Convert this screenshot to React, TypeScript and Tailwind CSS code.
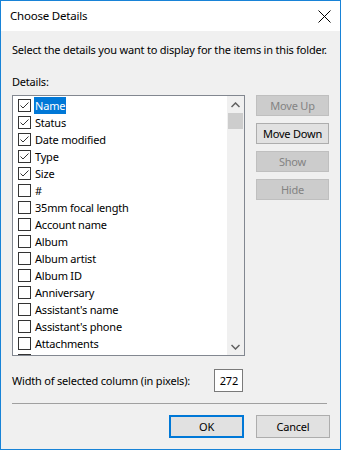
import React from "react";

const items: { label: string; checked: boolean }[] = [
  { label: "Name", checked: true },
  { label: "Status", checked: true },
  { label: "Date modified", checked: true },
  { label: "Type", checked: true },
  { label: "Size", checked: true },
  { label: "#", checked: false },
  { label: "35mm focal length", checked: false },
  { label: "Account name", checked: false },
  { label: "Album", checked: false },
  { label: "Album artist", checked: false },
  { label: "Album ID", checked: false },
  { label: "Anniversary", checked: false },
  { label: "Assistant's name", checked: false },
  { label: "Assistant's phone", checked: false },
  { label: "Attachments", checked: false },
  { label: "", checked: false },
];

function CheckBox({ checked }: { checked: boolean }) {
  return (
    <div className="w-[13px] h-[13px] border border-[#333333] bg-white shrink-0 flex items-center justify-center">
      {checked && (
        <svg width="11" height="11" viewBox="0 0 11 11">
          <path d="M1.5 5.5 L4 8 L9.5 2.5" fill="none" stroke="#333333" strokeWidth="1" />
        </svg>
      )}
    </div>
  );
}

function SideButton({ label, enabled }: { label: string; enabled: boolean }) {
  return (
    <div
      className={
        enabled
          ? "w-[73px] h-[21px] border border-[#adadad] bg-[#e1e1e1] text-black flex items-center justify-center"
          : "w-[73px] h-[21px] border border-[#bfbfbf] bg-[#cccccc] text-[#838383] flex items-center justify-center"
      }
    >
      {label}
    </div>
  );
}

export default function App() {
  return (
    <div
      className="w-[341px] h-[450px] border border-[#1883d7] bg-[#f0f0f0] flex flex-col text-[11px] leading-[16px] tracking-[-0.2px] text-black overflow-hidden whitespace-nowrap"
      style={{ fontFamily: '"Noto Sans", sans-serif' }}
    >
      <div className="h-[30px] bg-white flex items-center justify-between pl-[9px] pr-[9px] shrink-0">
        <span className="text-[11.5px]">Choose Details</span>
        <svg width="13" height="13" viewBox="0 0 13 13">
          <path d="M0.5 0.5 L12.5 12.5 M12.5 0.5 L0.5 12.5" stroke="#000" strokeWidth="1" fill="none" />
        </svg>
      </div>
      <div className="flex flex-col px-[11px]">
        <div className="mt-[11px]">Select the details you want to display for the items in this folder.</div>
        <div className="mt-[16px]">Details:</div>
        <div className="mt-[5px] flex">
          <div className="w-[233px] h-[261px] border border-[#828790] bg-white flex overflow-hidden">
            <div className="flex-1 flex flex-col pt-[1px] overflow-hidden">
              {items.map((it, i) => (
                <div key={i} className="h-[17px] shrink-0 flex items-center pl-[5px]">
                  <CheckBox checked={it.checked} />
                  {it.label && (
                    <span
                      className={
                        i === 0
                          ? "ml-[3px] px-[1px] h-[17px] flex items-center bg-[#0078d7] text-white"
                          : "ml-[3px] px-[1px]"
                      }
                    >
                      {it.label}
                    </span>
                  )}
                </div>
              ))}
            </div>
            <div className="w-[17px] bg-[#f0f0f0] flex flex-col shrink-0">
              <div className="h-[17px] flex items-center justify-center">
                <svg width="9" height="6" viewBox="0 0 9 6">
                  <path d="M0.5 5 L4.5 1 L8.5 5" fill="none" stroke="#606060" strokeWidth="1.5" />
                </svg>
              </div>
              <div className="h-[16px] mx-[1px] bg-[#cdcdcd]" />
              <div className="flex-1" />
              <div className="h-[17px] flex items-center justify-center">
                <svg width="9" height="6" viewBox="0 0 9 6">
                  <path d="M0.5 1 L4.5 5 L8.5 1" fill="none" stroke="#606060" strokeWidth="1.5" />
                </svg>
              </div>
            </div>
          </div>
          <div className="ml-[11px] flex flex-col gap-[7px]">
            <SideButton label="Move Up" enabled={false} />
            <SideButton label="Move Down" enabled={true} />
            <SideButton label="Show" enabled={false} />
            <SideButton label="Hide" enabled={false} />
          </div>
        </div>
        <div className="mt-[13px] flex items-center">
          <span className="w-[202px]">Width of selected column (in pixels):</span>
          <div className="w-[29px] h-[23px] border border-[#7a7a7a] bg-white flex items-center justify-end pr-[4px]">
            272
          </div>
        </div>
        <div className="mt-[11px] h-[1px] w-[315px] bg-[#a0a0a0]" />
        <div className="mt-[11px] flex justify-end gap-[12px] w-[318px]">
          <div className="w-[75px] h-[23px] border-2 border-[#0078d7] bg-[#e1e1e1] flex items-center justify-center">
            OK
          </div>
          <div className="w-[74px] h-[23px] border border-[#adadad] bg-[#e1e1e1] flex items-center justify-center">
            Cancel
          </div>
        </div>
      </div>
    </div>
  );
}
